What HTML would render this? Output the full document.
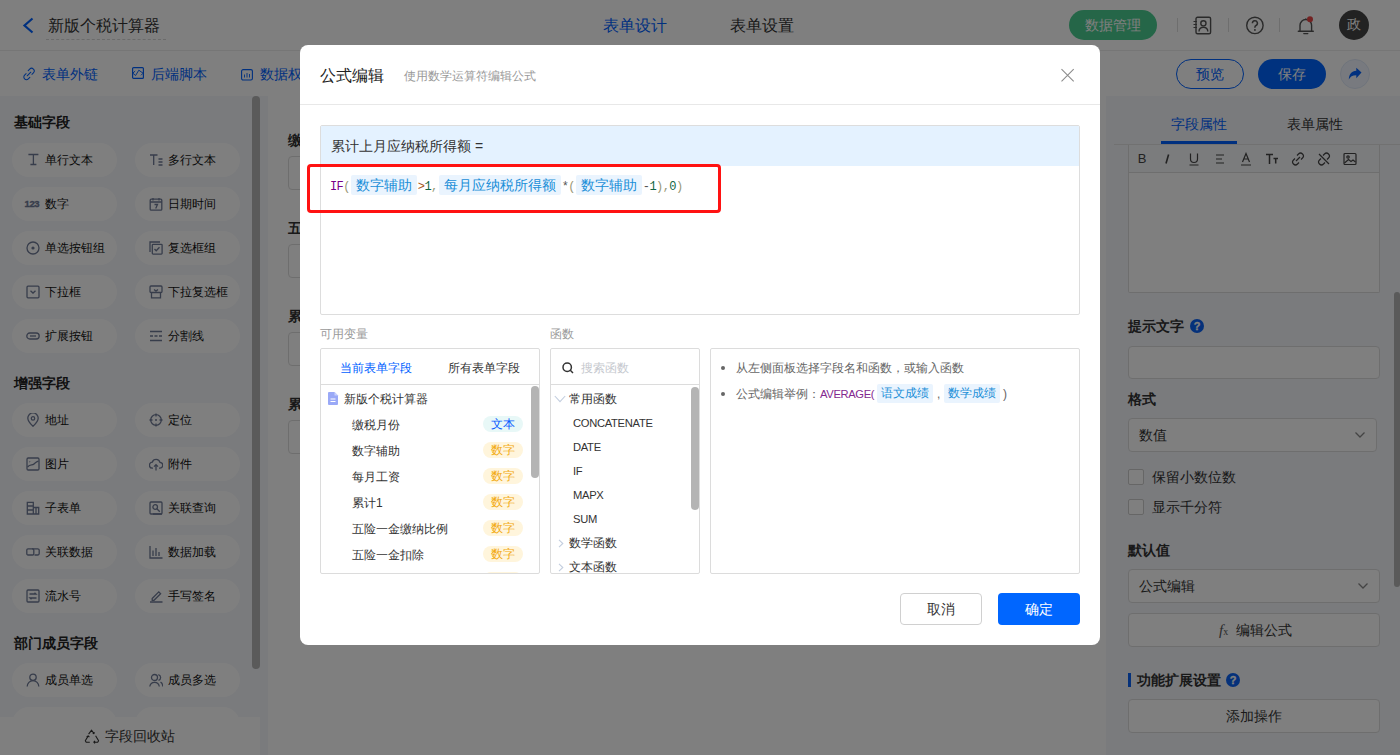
<!DOCTYPE html>
<html><head><meta charset="utf-8">
<style>
*{box-sizing:border-box;margin:0;padding:0}
html,body{width:1400px;height:755px;overflow:hidden;background:#fff}
body{font-family:"Liberation Sans",sans-serif;color:#333;position:relative}
.a{position:absolute;white-space:nowrap}
.t{line-height:20px;height:20px}
svg{display:block}
/* page */
#hdr{left:0;top:0;width:1400px;height:51px;background:#fff;border-bottom:1px solid #ececec}
#tb{left:0;top:51px;width:1400px;height:45px;background:#fff}
#lp{left:0;top:96px;width:268px;height:659px;background:#f4f6fa}
#cv{left:268px;top:96px;width:838px;height:659px;background:#fff}
#rp{left:1106px;top:96px;width:294px;height:659px;background:#f4f6fa}
.pill{position:absolute;width:105px;height:34px;border-radius:17px;background:#fff}
.pill .ic{position:absolute;left:13.5px;top:10px;width:14px;height:14px}
.pill .tx{position:absolute;left:33px;top:7px;line-height:20px;font-size:12px;color:#111}
.sec{position:absolute;left:14px;font-size:14px;font-weight:bold;color:#222;line-height:20px}
#mask{left:0;top:0;width:1400px;height:755px;background:rgba(0,0,0,.5)}
/* modal */
#modal{left:300px;top:45px;width:800px;height:600px;background:#fff;border-radius:8px}
.chip{display:inline-block;font-family:"Liberation Sans",sans-serif;font-size:14px;line-height:20px;height:20px;padding:0 5px;margin:0 1px;background:#eaf4fe;color:#1b8fd8;border-radius:2px;vertical-align:top}
.chip2{font-size:12px;line-height:19px;height:19px;padding:0 4px;background:#eaf4fe;color:#1b8fd8;border-radius:2px}
.code>span:not(.chip){position:relative;top:1.5px}
.chip{letter-spacing:0}
</style></head><body>
<div id="hdr" class="a">
 <svg class="a" style="left:20px;top:15px" width="16" height="21" viewBox="0 0 16 21"><polyline points="12.5,3.5 4.5,10.5 12.5,17.5" fill="none" stroke="#0061ff" stroke-width="2.2"/></svg>
 <div class="a" style="left:48px;top:15px;font-size:16px;line-height:22px;color:#333">新版个税计算器</div>
 <div class="a" style="left:46px;top:39px;width:120px;height:0;border-top:1px dashed #d6d6d6"></div>
 <div class="a" style="left:603px;top:15px;font-size:16px;line-height:22px;color:#0061ff">表单设计</div>
 <div class="a" style="left:730px;top:15px;font-size:16px;line-height:22px;color:#333">表单设置</div>
 <div class="a" style="left:1069px;top:10px;width:88px;height:30px;border-radius:15px;background:#4acc90;color:#fff;font-size:14px;line-height:30px;text-align:center">数据管理</div>
 <div class="a" style="left:1177px;top:18px;width:1px;height:14px;background:#ddd"></div>
 <div class="a" style="left:1228px;top:18px;width:1px;height:14px;background:#ddd"></div>
 <div class="a" style="left:1279px;top:18px;width:1px;height:14px;background:#ddd"></div>
 <svg class="a" style="left:1192px;top:16px" width="20" height="19" viewBox="0 0 20 19"><rect x="4" y="1.2" width="14.6" height="16.6" rx="1.5" fill="none" stroke="#555" stroke-width="1.4"/><path d="M1.5 5.5h3.5M1.5 8.5h3.5M1.5 11.5h3.5" stroke="#555" stroke-width="1.2"/><circle cx="11.4" cy="7.3" r="2.6" fill="none" stroke="#555" stroke-width="1.4"/><path d="M7 15.5c0-2.6 2-4.3 4.4-4.3s4.4 1.7 4.4 4.3" fill="none" stroke="#555" stroke-width="1.4"/></svg>
 <svg class="a" style="left:1245px;top:16px" width="20" height="19" viewBox="0 0 20 19"><circle cx="9.9" cy="9.4" r="8.2" fill="none" stroke="#555" stroke-width="1.4"/><path d="M7.4 7.2a2.5 2.5 0 1 1 3.6 2.3c-.8.4-1.1.9-1.1 1.7v.6" fill="none" stroke="#555" stroke-width="1.5"/><circle cx="9.9" cy="13.9" r="0.95" fill="#555"/></svg>
 <svg class="a" style="left:1296px;top:16px" width="20" height="20" viewBox="0 0 20 20"><path d="M4 15.2V9.3a5.8 5.8 0 0 1 11.6 0v5.9M2.3 15.3h15M7.8 17.6h4" fill="none" stroke="#555" stroke-width="1.4" stroke-linecap="round"/><path d="M9.8 2.5v1" stroke="#555" stroke-width="1.4"/><circle cx="14" cy="3.2" r="3" fill="#e64545"/></svg>
 <div class="a" style="left:1339px;top:10px;width:30px;height:30px;border-radius:15px;background:#444;color:#fff;font-family:'Liberation Serif',serif;font-size:14px;line-height:30px;text-align:center">政</div>
</div>
<div id="tb" class="a">
 <svg class="a" style="left:22px;top:16px" width="14" height="14" viewBox="0 0 14 14"><path d="M6.2 3.6l1.5-1.5a2.6 2.6 0 0 1 3.7 3.7L9.9 7.3M7.8 10.4l-1.5 1.5a2.6 2.6 0 0 1-3.7-3.7l1.5-1.5M5.2 8.8l3.6-3.6" fill="none" stroke="#0061ff" stroke-width="1.05" stroke-linecap="round"/></svg>
 <div class="a" style="left:42px;top:13px;font-size:14px;line-height:20px;color:#0061ff">表单外链</div>
 <svg class="a" style="left:132px;top:16px" width="12" height="12" viewBox="0 0 12 12"><rect x="0.6" y="0.6" width="10.8" height="10.8" rx="1" fill="none" stroke="#0061ff" stroke-width="1.2"/><path d="M0.8 6.2L3.2 4M0.8 6.2L3.6 8.5M3.6 8.5L6.8 3.2M6.8 3.2l4.3 3M11.1 6.2L9 8.3" fill="none" stroke="#0061ff" stroke-width="0.95"/></svg>
 <div class="a" style="left:151px;top:13px;font-size:14px;line-height:20px;color:#0061ff">后端脚本</div>
 <svg class="a" style="left:241px;top:17.5px" width="12" height="12" viewBox="0 0 12 12"><rect x="0.6" y="0.6" width="10.8" height="10.4" rx="1.5" fill="none" stroke="#0061ff" stroke-width="1.1"/><path d="M3.5 5.5v3M6 4v4.5M8.5 5v3.5" stroke="#0061ff" stroke-width="0.9"/></svg>
 <div class="a" style="left:260px;top:13px;font-size:14px;line-height:20px;color:#0061ff">数据权限</div>
 <div class="a" style="left:1176px;top:8px;width:68px;height:30px;border-radius:15px;border:1px solid #0061ff;color:#0061ff;font-size:14px;line-height:28px;text-align:center">预览</div>
 <div class="a" style="left:1258px;top:8px;width:68px;height:30px;border-radius:15px;background:#0064ff;color:#fff;font-size:14px;line-height:30px;text-align:center">保存</div>
 <div class="a" style="left:1340px;top:8px;width:30px;height:30px;border-radius:15px;background:#f0f5ff;border:1px solid #dfe8f7"></div>
 <svg class="a" style="left:1347px;top:15px" width="16" height="16" viewBox="0 0 16 16"><path d="M14.5 6.5L9.3 1.8v3C4.6 5.2 2 8.4 1.8 13.6c1.3-2.8 3.7-4.3 7.5-4.3v3z" fill="#0061ff"/></svg>
</div>
<div id="lp" class="a">
<div class="sec" style="top:16px">基础字段</div>
<div class="pill" style="left:12px;top:47px"><div class="ic"><svg width="14" height="14" viewBox="0 0 14 14" fill="none" stroke="#6f7a96" stroke-width="1.3"><path d="M2.4 1.5h10M7.4 1.5v10M4.4 11.5h6"/></svg></div><div class="tx">单行文本</div></div>
<div class="pill" style="left:135px;top:47px"><div class="ic"><svg width="14" height="14" viewBox="0 0 14 14" fill="none" stroke="#6f7a96" stroke-width="1.3"><path d="M1 2h7.5M4.7 2v10M9.5 6h4M9.5 9h4M9.5 12h4"/></svg></div><div class="tx">多行文本</div></div>
<div class="pill" style="left:12px;top:91px"><div class="ic"><div style="font:bold 9.5px/14px 'Liberation Sans',sans-serif;color:#6f7a96;margin-left:-1px;letter-spacing:-0.4px;-webkit-text-stroke:0.35px #6f7a96">123</div></div><div class="tx">数字</div></div>
<div class="pill" style="left:135px;top:91px"><div class="ic"><svg width="14" height="14" viewBox="0 0 14 14" fill="none" stroke="#6f7a96" stroke-width="1.3"><rect x="1.2" y="2.2" width="11.6" height="11" rx="1"/><path d="M1.2 5h11.6M4 1v2.5M10 1v2.5M5.5 7.5h3l-1.8 4"/></svg></div><div class="tx">日期时间</div></div>
<div class="pill" style="left:12px;top:135px"><div class="ic"><svg width="14" height="14" viewBox="0 0 14 14" fill="none" stroke="#6f7a96" stroke-width="1.3"><circle cx="7" cy="7" r="6"/><circle cx="7" cy="7" r="1.6" fill="#6f7a96" stroke="none"/></svg></div><div class="tx">单选按钮组</div></div>
<div class="pill" style="left:135px;top:135px"><div class="ic"><svg width="14" height="14" viewBox="0 0 14 14" fill="none" stroke="#6f7a96" stroke-width="1.3"><path d="M1 11V1h10"/><rect x="3.3" y="3.3" width="9.8" height="9.8" rx="0.8"/><path d="M5.5 8l1.7 1.8 3.3-3.6"/></svg></div><div class="tx">复选框组</div></div>
<div class="pill" style="left:12px;top:179px"><div class="ic"><svg width="14" height="14" viewBox="0 0 14 14" fill="none" stroke="#6f7a96" stroke-width="1.3"><rect x="1" y="1.2" width="12" height="11.6" rx="1"/><path d="M4.5 5.8l2.5 2.3 2.5-2.3"/></svg></div><div class="tx">下拉框</div></div>
<div class="pill" style="left:135px;top:179px"><div class="ic"><svg width="14" height="14" viewBox="0 0 14 14" fill="none" stroke="#6f7a96" stroke-width="1.3"><rect x="1" y="1" width="12" height="6.5" rx="1"/><path d="M2.5 7.5v5.3h9V7.5M5 4.5l2 1.6 2-1.6"/></svg></div><div class="tx">下拉复选框</div></div>
<div class="pill" style="left:12px;top:223px"><div class="ic"><svg width="14" height="14" viewBox="0 0 14 14" fill="none" stroke="#6f7a96" stroke-width="1.3"><rect x="0.8" y="4" width="12.4" height="6" rx="3"/><path d="M4 7h6"/></svg></div><div class="tx">扩展按钮</div></div>
<div class="pill" style="left:135px;top:223px"><div class="ic"><svg width="14" height="14" viewBox="0 0 14 14" fill="none" stroke="#6f7a96" stroke-width="1.3"><path d="M1 2.5h12M1 11.5h12M1 7h3M5.5 7h3M10 7h3"/></svg></div><div class="tx">分割线</div></div>
<div class="sec" style="top:277px">增强字段</div>
<div class="pill" style="left:12px;top:307px"><div class="ic"><svg width="14" height="14" viewBox="0 0 14 14" fill="none" stroke="#6f7a96" stroke-width="1.3"><path d="M7 13.3s-5.2-4.7-5.2-8.2a5.2 5.2 0 0 1 10.4 0c0 3.5-5.2 8.2-5.2 8.2z"/><circle cx="7" cy="5.4" r="1.7"/></svg></div><div class="tx">地址</div></div>
<div class="pill" style="left:135px;top:307px"><div class="ic"><svg width="14" height="14" viewBox="0 0 14 14" fill="none" stroke="#6f7a96" stroke-width="1.3"><circle cx="7" cy="7" r="5.3"/><path d="M7 .5v3M7 10.5v3M.5 7h3M10.5 7h3"/><circle cx="7" cy="7" r="1" fill="#6f7a96" stroke="none"/></svg></div><div class="tx">定位</div></div>
<div class="pill" style="left:12px;top:351px"><div class="ic"><svg width="14" height="14" viewBox="0 0 14 14" fill="none" stroke="#6f7a96" stroke-width="1.3"><rect x="1" y="1" width="12" height="12" rx="1.2"/><path d="M1.5 10c3-3.5 4.5-1 6.5-3s3-2.2 4.5-3M3.5 4.5l.5.5"/></svg></div><div class="tx">图片</div></div>
<div class="pill" style="left:135px;top:351px"><div class="ic"><svg width="14" height="14" viewBox="0 0 14 14" fill="none" stroke="#6f7a96" stroke-width="1.3"><path d="M4 11.2H3.6a3 3 0 0 1-.3-6A4 4 0 0 1 11 5.3a2.9 2.9 0 0 1-.5 5.9H10M7 13.5V7.8M5 9.6L7 7.6l2 2"/></svg></div><div class="tx">附件</div></div>
<div class="pill" style="left:12px;top:395px"><div class="ic"><svg width="14" height="14" viewBox="0 0 14 14" fill="none" stroke="#6f7a96" stroke-width="1.3"><path d="M1.3 13V1.3h6V13zM7.3 6.5h5.4V13H1.3M1.3 5h6M1.3 9h6M10 6.5v6.5"/></svg></div><div class="tx">子表单</div></div>
<div class="pill" style="left:135px;top:395px"><div class="ic"><svg width="14" height="14" viewBox="0 0 14 14" fill="none" stroke="#6f7a96" stroke-width="1.3"><rect x="1" y="1" width="12" height="12" rx="1"/><circle cx="6.2" cy="6" r="2.3"/><path d="M7.8 7.8l3 3M4 13h9"/></svg></div><div class="tx">关联查询</div></div>
<div class="pill" style="left:12px;top:439px"><div class="ic"><svg width="14" height="14" viewBox="0 0 14 14" fill="none" stroke="#6f7a96" stroke-width="1.3"><rect x="0.8" y="3.8" width="7" height="6.2" rx="1.2"/><path d="M6 3.8h5.7a1.5 1.5 0 0 1 1.5 1.5v3.2a1.5 1.5 0 0 1-1.5 1.5H8.5"/></svg></div><div class="tx">关联数据</div></div>
<div class="pill" style="left:135px;top:439px"><div class="ic"><svg width="14" height="14" viewBox="0 0 14 14" fill="none" stroke="#6f7a96" stroke-width="1.3"><path d="M1 1v12h12.5M4 5.5v5.5M7 3v8M10 7v4"/></svg></div><div class="tx">数据加载</div></div>
<div class="pill" style="left:12px;top:483px"><div class="ic"><svg width="14" height="14" viewBox="0 0 14 14" fill="none" stroke="#6f7a96" stroke-width="1.3"><rect x="1" y="1" width="12" height="12" rx="1"/><path d="M3.5 5h6.5l-1.5-1.3M10.5 9H4l1.5 1.3"/></svg></div><div class="tx">流水号</div></div>
<div class="pill" style="left:135px;top:483px"><div class="ic"><svg width="14" height="14" viewBox="0 0 14 14" fill="none" stroke="#6f7a96" stroke-width="1.3"><path d="M3.2 9.5L9.8 2.9l1.8 1.8L5 11.3H3.2z M1 13h12.5"/></svg></div><div class="tx">手写签名</div></div>
<div class="sec" style="top:537px">部门成员字段</div>
<div class="pill" style="left:12px;top:567px"><div class="ic"><svg width="14" height="14" viewBox="0 0 14 14" fill="none" stroke="#6f7a96" stroke-width="1.3"><circle cx="7" cy="4.3" r="3.2"/><path d="M1.2 13.5a5.8 5.8 0 0 1 11.6 0"/></svg></div><div class="tx">成员单选</div></div>
<div class="pill" style="left:135px;top:567px"><div class="ic"><svg width="14" height="14" viewBox="0 0 14 14" fill="none" stroke="#6f7a96" stroke-width="1.3"><circle cx="5.5" cy="4.5" r="3"/><path d="M.8 13.5a4.8 4.8 0 0 1 9.5 0M9.3 1.6a3 3 0 0 1 .2 5.8M11.5 9a4.8 4.8 0 0 1 2.2 4.5"/></svg></div><div class="tx">成员多选</div></div>
<div class="pill" style="left:12px;top:611px"><div class="ic"><svg width="14" height="14" viewBox="0 0 14 14" fill="none" stroke="#6f7a96" stroke-width="1.3"><circle cx="7" cy="5" r="3"/></svg></div><div class="tx">部门单选</div></div>
<div class="pill" style="left:135px;top:611px"><div class="ic"><svg width="14" height="14" viewBox="0 0 14 14" fill="none" stroke="#6f7a96" stroke-width="1.3"><circle cx="7" cy="5" r="3"/></svg></div><div class="tx">部门多选</div></div>
<div class="a" style="left:252px;top:0;width:8px;height:573px;border-radius:4px;background:#b4b4b4"></div>
<div class="a" style="left:0;top:621px;width:260px;height:38px;background:#fff"><svg class="a" style="left:84px;top:12px" width="16" height="15" viewBox="0 0 16 15" fill="none" stroke="#333" stroke-width="1.1" stroke-linejoin="round"><path d="M4.6 5.2L7.6 1.2 10 4.6M8.7 4.2l1.3.4.3-1.4M11.6 6.8l3 5-.9 1.4H9.8M11 11.8l-1.2 1.4 1.2 1.2M5.8 13.2H2.2l-.9-1.4 2.9-4.9M2.6 8l1.6-1.1 1.2 1.2"/></svg><div class="a" style="left:105px;top:8px;font-size:14px;line-height:22px;color:#333">字段回收站</div></div>
</div>
<div id="cv" class="a">
<div class="a" style="left:20px;top:34px;font-size:14px;font-weight:bold;line-height:20px;color:#333">缴税月份</div>
<div class="a" style="left:20px;top:60px;width:400px;height:34px;border:1px solid #ddd;border-radius:4px;background:#fff"></div>
<div class="a" style="left:20px;top:122px;font-size:14px;font-weight:bold;line-height:20px;color:#333">五险一金缴纳比例</div>
<div class="a" style="left:20px;top:148px;width:400px;height:34px;border:1px solid #ddd;border-radius:4px;background:#fff"></div>
<div class="a" style="left:20px;top:210px;font-size:14px;font-weight:bold;line-height:20px;color:#333">累计1</div>
<div class="a" style="left:20px;top:236px;width:400px;height:34px;border:1px solid #ddd;border-radius:4px;background:#fff"></div>
<div class="a" style="left:20px;top:298px;font-size:14px;font-weight:bold;line-height:20px;color:#333">累计上月应纳税所得额</div>
<div class="a" style="left:20px;top:324px;width:400px;height:34px;border:1px solid #ddd;border-radius:4px;background:#fff"></div>
</div>
<div id="rp" class="a">
<div class="a" style="left:65px;top:18px;font-size:14px;line-height:20px;color:#0061ff">字段属性</div>
<div class="a" style="left:181px;top:18px;font-size:14px;line-height:20px;color:#333">表单属性</div>
<div class="a" style="left:8px;top:48px;width:300px;height:1px;background:#e3e3e3"></div>
<div class="a" style="left:55px;top:45px;width:76px;height:3px;background:#0061ff"></div>
<div class="a" style="left:22px;top:49px;width:252px;height:148px;border:1px solid #ddd;border-top:none;border-radius:0 0 2px 2px;background:#fff"><div class="a" style="left:0;top:0;width:250px;height:28px;background:#f7f8fa;border-bottom:1px solid #ddd"></div></div>
<div class="a" style="left:29px;top:56px;width:14px;height:14px"><div style="font:13px/14px 'Liberation Sans',sans-serif;color:#444;text-align:center;width:14px">B</div></div>
<div class="a" style="left:54px;top:56px;width:14px;height:14px"><svg width="14" height="14" viewBox="0 0 14 14"><path d="M8.6 2.5L6 11.5" stroke="#444" stroke-width="1.6"/></svg></div>
<div class="a" style="left:81px;top:56px;width:14px;height:14px"><svg width="14" height="14" viewBox="0 0 14 14" fill="none" stroke="#444" stroke-width="1.2"><path d="M3.5 1.5v5.5a3.5 3.5 0 0 0 7 0V1.5M2.5 13h9"/></svg></div>
<div class="a" style="left:107px;top:56px;width:14px;height:14px"><svg width="14" height="14" viewBox="0 0 14 14" fill="none" stroke="#444" stroke-width="1.1"><path d="M3 3h8M3 7h6M3 11h8"/></svg></div>
<div class="a" style="left:133px;top:56px;width:14px;height:14px"><svg width="14" height="14" viewBox="0 0 14 14" fill="none" stroke="#444" stroke-width="1.2"><path d="M3.5 10L7 1.5 10.5 10M4.7 7h4.6M2 13h10"/></svg></div>
<div class="a" style="left:159px;top:56px;width:14px;height:14px"><svg width="14" height="14" viewBox="0 0 14 14" fill="none" stroke="#444" stroke-width="1.5"><path d="M1 2.5h7M4.5 2.5v9.5M8.5 6.5h4.5M10.7 6.5v5"/></svg></div>
<div class="a" style="left:185px;top:56px;width:14px;height:14px"><svg width="14" height="14" viewBox="0 0 14 14" fill="none" stroke="#444" stroke-width="1.2"><path d="M6 3.5l1.5-1.5a2.8 2.8 0 0 1 4 4L10 7.5M8 10.5l-1.5 1.5a2.8 2.8 0 0 1-4-4L4 6.5M5 9l4-4"/></svg></div>
<div class="a" style="left:211px;top:56px;width:14px;height:14px"><svg width="14" height="14" viewBox="0 0 14 14" fill="none" stroke="#444" stroke-width="1.2"><path d="M6 3.5l1.5-1.5a2.8 2.8 0 0 1 4 4L10 7.5M8 10.5l-1.5 1.5a2.8 2.8 0 0 1-4-4L4 6.5M2 2l10 10"/></svg></div>
<div class="a" style="left:237px;top:56px;width:14px;height:14px"><svg width="14" height="14" viewBox="0 0 14 14" fill="none" stroke="#444" stroke-width="1.2"><rect x="1" y="1.5" width="12" height="11" rx="1"/><circle cx="5" cy="5" r="1.2"/><path d="M1.5 11l4-3.5 2.5 2 2-1.5 2.5 2"/></svg></div>
<div class="a" style="left:22px;top:220px;font-size:14px;line-height:20px;color:#333;font-weight:bold">提示文字</div>
<div class="a" style="left:84px;top:223px;width:14px;height:14px;border-radius:7px;background:#0a62f5;color:#fff;font:bold 11px/14px 'Liberation Sans',sans-serif;text-align:center;-webkit-text-stroke:0.3px #fff">?</div>
<div class="a" style="left:22px;top:250px;width:252px;height:33px;border:1px solid #ddd;border-radius:4px;background:#fff"></div>
<div class="a" style="left:22px;top:293px;font-size:14px;line-height:20px;color:#333;font-weight:bold">格式</div>
<div class="a" style="left:22px;top:322px;width:249px;height:34px;border:1px solid #ddd;border-radius:4px;background:#fff"><div class="a" style="left:10px;top:6px;font-size:14px;line-height:20px;color:#333">数值</div><svg class="a" style="right:10px;top:12px" width="12" height="8" viewBox="0 0 12 8"><path d="M1.5 1.5l4.5 4.5 4.5-4.5" fill="none" stroke="#888" stroke-width="1.3"/></svg></div>
<div class="a" style="left:22px;top:373px;width:16px;height:16px;border:1px solid #ccc;border-radius:2px;background:#fff"></div>
<div class="a" style="left:46px;top:371px;font-size:14px;line-height:20px;color:#333;">保留小数位数</div>
<div class="a" style="left:22px;top:403px;width:16px;height:16px;border:1px solid #ccc;border-radius:2px;background:#fff"></div>
<div class="a" style="left:46px;top:401px;font-size:14px;line-height:20px;color:#333;">显示千分符</div>
<div class="a" style="left:22px;top:444px;font-size:14px;line-height:20px;color:#333;font-weight:bold">默认值</div>
<div class="a" style="left:22px;top:473px;width:252px;height:34px;border:1px solid #ddd;border-radius:4px;background:#fff"><div class="a" style="left:10px;top:6px;font-size:14px;line-height:20px;color:#333">公式编辑</div><svg class="a" style="right:10px;top:12px" width="12" height="8" viewBox="0 0 12 8"><path d="M1.5 1.5l4.5 4.5 4.5-4.5" fill="none" stroke="#888" stroke-width="1.3"/></svg></div>
<div class="a" style="left:22px;top:517px;width:252px;height:34px;border:1px solid #ddd;border-radius:4px;background:#fff"><div class="a" style="left:90px;top:6px;font-family:'Liberation Serif',serif;font-style:italic;font-size:15px;line-height:20px;color:#555">f<span style="font-size:10px;font-style:normal">x</span></div><div class="a" style="left:107px;top:6px;font-size:14px;line-height:20px;color:#333">编辑公式</div></div>
<div class="a" style="left:22px;top:577px;width:3px;height:14px;background:#0a62f5"></div>
<div class="a" style="left:31px;top:574px;font-size:14px;line-height:20px;color:#333;font-weight:bold">功能扩展设置</div>
<div class="a" style="left:120px;top:577px;width:14px;height:14px;border-radius:7px;background:#0a62f5;color:#fff;font:bold 11px/14px 'Liberation Sans',sans-serif;text-align:center;-webkit-text-stroke:0.3px #fff">?</div>
<div class="a" style="left:22px;top:603px;width:252px;height:34px;border:1px solid #ddd;border-radius:4px;background:#fff"><div class="a" style="left:0;width:250px;text-align:center;top:6px;font-size:14px;line-height:20px;color:#333">添加操作</div></div>
<div class="a" style="left:288px;top:196px;width:6px;height:295px;border-radius:3px;background:#b4b4b4"></div>
</div>
<div id="mask" class="a"></div>
<div id="modal" class="a">
<div class="a" style="left:20px;top:20px;font-size:16px;line-height:22px;color:#222">公式编辑</div>
<div class="a" style="left:104px;top:22px;font-size:12px;line-height:18px;color:#999">使用数学运算符编辑公式</div>
<svg class="a" style="left:760px;top:23px" width="15" height="15" viewBox="0 0 15 15"><path d="M1.5 1.2l12.2 12.2M13.7 1.2L1.5 13.4" stroke="#8c8c8c" stroke-width="1.1"/></svg>
<div class="a" style="left:0;top:59px;width:800px;height:1px;background:#e8e8e8"></div>
<div class="a" style="left:20px;top:80px;width:760px;height:190px;border:1px solid #ddd;border-radius:2px;background:#fff;overflow:hidden">
<div class="a" style="left:0;top:0;width:758px;height:40px;background:#e4f2ff"></div>
<div class="a" style="left:10px;top:10px;font-size:14px;line-height:20px;color:#333">累计上月应纳税所得额 =</div>
<div class="a code" style="left:9px;top:49px;height:20px;line-height:20px;font-family:'Liberation Mono',monospace;font-size:12px;letter-spacing:-0.6px;color:#333"><span style="color:#708">IF</span><span style="color:#997">(</span><span class="chip">数字辅助</span><span style="color:#a65518">&gt;</span><span style="color:#164">1</span><span style="color:#997">,</span><span class="chip">每月应纳税所得额</span><span style="color:#555">*</span><span style="color:#997">(</span><span class="chip">数字辅助</span><span style="color:#555">-</span><span style="color:#164">1</span><span style="color:#997">),</span><span style="color:#164">0</span><span style="color:#997">)</span></div>
</div>
<div class="a" style="left:7px;top:119px;width:414px;height:49px;border:3px solid #ff1212;border-radius:4px"></div>
<div class="a" style="left:20px;top:280px;font-size:12px;line-height:18px;color:#999">可用变量</div>
<div class="a" style="left:250px;top:280px;font-size:12px;line-height:18px;color:#999">函数</div>
<div class="a" style="left:20px;top:303px;width:220px;height:226px;border:1px solid #dcdcdc;border-radius:2px;overflow:hidden;background:#fff">
<div class="a" style="left:19px;top:9px;font-size:12px;line-height:20px;color:#0061ff">当前表单字段</div>
<div class="a" style="left:127px;top:9px;font-size:12px;line-height:20px;color:#333">所有表单字段</div>
<div class="a" style="left:0;top:35px;width:220px;height:1px;background:#dcdcdc"></div>
<svg class="a" style="left:7px;top:43px" width="11" height="13" viewBox="0 0 11 13"><path d="M0 1a1 1 0 0 1 1-1h5.5L10 3.5V12a1 1 0 0 1-1 1H1a1 1 0 0 1-1-1z" fill="#9aa9f7"/><path d="M6.5 0v3.5H10" fill="#c9d2fb"/><path d="M2.5 7h5M2.5 9.5h5" stroke="#fff" stroke-width="1.1"/></svg>
<div class="a" style="left:23px;top:40px;font-size:12px;line-height:20px;color:#333">新版个税计算器</div>
<div class="a" style="left:31px;top:66px;font-size:12px;line-height:20px;color:#333">缴税月份</div>
<div class="a" style="left:162px;top:67px;width:40px;height:16px;border-radius:8px;background:#e8f8f7;color:#0a5cff;font-size:12px;line-height:16px;text-align:center">文本</div>
<div class="a" style="left:31px;top:92px;font-size:12px;line-height:20px;color:#333">数字辅助</div>
<div class="a" style="left:162px;top:93px;width:40px;height:16px;border-radius:8px;background:#fff5dc;color:#f2a90e;font-size:12px;line-height:16px;text-align:center">数字</div>
<div class="a" style="left:31px;top:118px;font-size:12px;line-height:20px;color:#333">每月工资</div>
<div class="a" style="left:162px;top:119px;width:40px;height:16px;border-radius:8px;background:#fff5dc;color:#f2a90e;font-size:12px;line-height:16px;text-align:center">数字</div>
<div class="a" style="left:31px;top:144px;font-size:12px;line-height:20px;color:#333">累计1</div>
<div class="a" style="left:162px;top:145px;width:40px;height:16px;border-radius:8px;background:#fff5dc;color:#f2a90e;font-size:12px;line-height:16px;text-align:center">数字</div>
<div class="a" style="left:31px;top:170px;font-size:12px;line-height:20px;color:#333">五险一金缴纳比例</div>
<div class="a" style="left:162px;top:171px;width:40px;height:16px;border-radius:8px;background:#fff5dc;color:#f2a90e;font-size:12px;line-height:16px;text-align:center">数字</div>
<div class="a" style="left:31px;top:196px;font-size:12px;line-height:20px;color:#333">五险一金扣除</div>
<div class="a" style="left:162px;top:197px;width:40px;height:16px;border-radius:8px;background:#fff5dc;color:#f2a90e;font-size:12px;line-height:16px;text-align:center">数字</div>
<div class="a" style="left:31px;top:222px;font-size:12px;line-height:20px;color:#333">累计2</div>
<div class="a" style="left:162px;top:223px;width:40px;height:16px;border-radius:8px;background:#fff5dc;color:#f2a90e;font-size:12px;line-height:16px;text-align:center">数字</div>
<div class="a" style="left:210px;top:37px;width:8px;height:92px;border-radius:4px;background:#b4b4b4"></div>
</div>
<div class="a" style="left:250px;top:303px;width:150px;height:226px;border:1px solid #dcdcdc;border-radius:2px;overflow:hidden;background:#fff">
<svg class="a" style="left:11px;top:13px" width="12" height="12" viewBox="0 0 12 12"><circle cx="5.2" cy="5.2" r="4.2" fill="none" stroke="#333" stroke-width="1.5"/><path d="M8.3 8.3l2.7 2.7" stroke="#333" stroke-width="1.5"/></svg>
<div class="a" style="left:30px;top:9px;font-size:12px;line-height:20px;color:#c5c8ce">搜索函数</div>
<div class="a" style="left:0;top:35px;width:150px;height:1px;background:#dcdcdc"></div>
<svg class="a" style="left:3px;top:46px" width="12" height="8" viewBox="0 0 12 8"><path d="M.8 1L6 6.6 11.2 1" fill="none" stroke="#c3cedf" stroke-width="1.1"/></svg>
<div class="a" style="left:18px;top:40px;font-size:12px;line-height:20px;color:#333">常用函数</div>
<div class="a" style="left:22px;top:64px;font-size:11.2px;line-height:20px;color:#333;letter-spacing:-0.3px">CONCATENATE</div>
<div class="a" style="left:22px;top:88px;font-size:11.2px;line-height:20px;color:#333;letter-spacing:-0.3px">DATE</div>
<div class="a" style="left:22px;top:112px;font-size:11.2px;line-height:20px;color:#333;letter-spacing:-0.3px">IF</div>
<div class="a" style="left:22px;top:136px;font-size:11.2px;line-height:20px;color:#333;letter-spacing:-0.3px">MAPX</div>
<div class="a" style="left:22px;top:160px;font-size:11.2px;line-height:20px;color:#333;letter-spacing:-0.3px">SUM</div>
<svg class="a" style="left:7px;top:190px" width="6" height="9" viewBox="0 0 6 9"><path d="M1 .8L4.8 4.5 1 8.2" fill="none" stroke="#c3cedf" stroke-width="1.1"/></svg>
<div class="a" style="left:18px;top:184px;font-size:12px;line-height:20px;color:#333">数学函数</div>
<svg class="a" style="left:7px;top:214px" width="6" height="9" viewBox="0 0 6 9"><path d="M1 .8L4.8 4.5 1 8.2" fill="none" stroke="#c3cedf" stroke-width="1.1"/></svg>
<div class="a" style="left:18px;top:208px;font-size:12px;line-height:20px;color:#333">文本函数</div>
<div class="a" style="left:140px;top:38px;width:8px;height:123px;border-radius:4px;background:#b4b4b4"></div>
</div>
<div class="a" style="left:410px;top:303px;width:370px;height:226px;border:1px solid #dcdcdc;border-radius:2px;background:#fff">
<div class="a" style="left:10px;top:17px;width:4px;height:4px;border-radius:2px;background:#666"></div>
<div class="a" style="left:25px;top:9px;font-size:12px;line-height:20px;color:#666">从左侧面板选择字段名和函数，或输入函数</div>
<div class="a" style="left:10px;top:43px;width:4px;height:4px;border-radius:2px;background:#666"></div>
<div class="a" style="left:25px;top:35px;font-size:12px;line-height:20px;color:#666">公式编辑举例：</div>
<div class="a" style="left:109px;top:35px;font-size:11.2px;line-height:20px;color:#84288f;letter-spacing:-0.35px">AVERAGE(</div>
<div class="a chip2" style="left:166px;top:35px">语文成绩</div>
<div class="a" style="left:226px;top:35px;font-size:12px;line-height:20px;color:#666">,</div>
<div class="a chip2" style="left:233px;top:35px">数学成绩</div>
<div class="a" style="left:292px;top:35px;font-size:12px;line-height:20px;color:#666">)</div>
</div>
<div class="a" style="left:600px;top:548px;width:82px;height:32px;border:1px solid #d0d0d0;border-radius:4px;background:#fff;font-size:14px;line-height:30px;text-align:center;color:#333">取消</div>
<div class="a" style="left:698px;top:548px;width:82px;height:32px;border-radius:4px;background:#0066ff;font-size:14px;line-height:32px;text-align:center;color:#fff">确定</div>
</div>
</body></html>
